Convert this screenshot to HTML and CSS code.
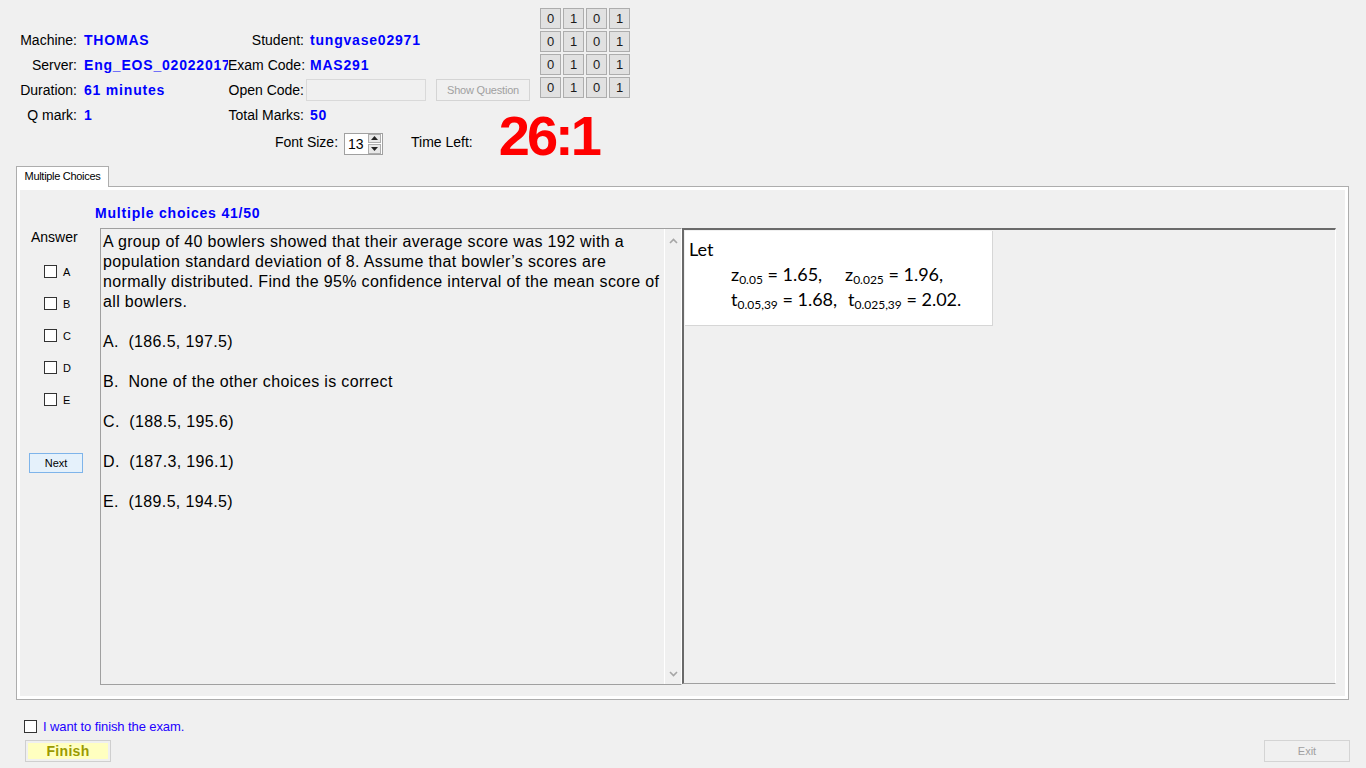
FILE: index.html
```html
<!DOCTYPE html>
<html lang="en">
<head>
<meta charset="utf-8">
<title>Exam Client</title>
<link rel="stylesheet" href="styles.css">
</head>
<body>
<div class="app">
  <header class="top">
    <div class="top-main">
      <div class="info">
        <span class="lbl c1">Machine:</span><span class="val">THOMAS</span>
        <span class="lbl c3">Student:</span><span class="val">tungvase02971</span>

        <span class="lbl c1">Server:</span><span class="val">Eng_EOS_02022017</span>
        <span class="lbl c3">Exam Code:</span><span class="val">MAS291</span>

        <span class="lbl c1">Duration:</span><span class="val">61 minutes</span>
        <span class="lbl c3">Open Code:</span>
        <span class="open-cell"><span class="textbox"></span><span class="btn-disabled showq">Show Question</span></span>

        <span class="lbl c1">Q mark:</span><span class="val">1</span>
        <span class="lbl c3">Total Marks:</span><span class="val">50</span>
      </div>
      <div class="bits">
        <span class="bit">0</span><span class="bit">1</span><span class="bit">0</span><span class="bit">1</span>
        <span class="bit">0</span><span class="bit">1</span><span class="bit">0</span><span class="bit">1</span>
        <span class="bit">0</span><span class="bit">1</span><span class="bit">0</span><span class="bit">1</span>
        <span class="bit">0</span><span class="bit">1</span><span class="bit">0</span><span class="bit">1</span>
      </div>
    </div>
    <div class="fontrow">
      <span class="fs-label">Font Size:</span>
      <span class="num">
        <span class="num-val">13</span>
        <span class="spin">
          <span class="spin-btn"><svg width="7" height="4" viewBox="0 0 7 4"><path d="M0 4 L3.5 0 L7 4 Z" fill="#222"/></svg></span>
          <span class="spin-btn"><svg width="7" height="4" viewBox="0 0 7 4"><path d="M0 0 L3.5 4 L7 0 Z" fill="#222"/></svg></span>
        </span>
      </span>
      <span class="tl-label">Time Left:</span>
      <span class="timer">26:1</span>
    </div>
  </header>

  <section class="tabs">
    <div class="tab">Multiple Choices</div>
    <div class="panel">
      <div class="page">
        <div class="heading">Multiple choices 41/50</div>
        <div class="body">
          <div class="answers">
            <div class="ans-title">Answer</div>
            <div class="choice"><span class="cb"></span><span class="cl">A</span></div>
            <div class="choice"><span class="cb"></span><span class="cl">B</span></div>
            <div class="choice"><span class="cb"></span><span class="cl">C</span></div>
            <div class="choice"><span class="cb"></span><span class="cl">D</span></div>
            <div class="choice"><span class="cb"></span><span class="cl">E</span></div>
            <div class="next">Next</div>
          </div>
          <div class="qbox">
            <div class="qtext">
              <p>A group of 40 bowlers showed that their average score was 192 with a<br>population standard deviation of 8. Assume that bowler’s scores are<br>normally distributed. Find the 95% confidence interval of the mean score of<br>all bowlers.</p>
              <p>A.&nbsp; (186.5, 197.5)</p>
              <p>B.&nbsp; None of the other choices is correct</p>
              <p>C.&nbsp; (188.5, 195.6)</p>
              <p>D.&nbsp; (187.3, 196.1)</p>
              <p>E.&nbsp; (189.5, 194.5)</p>
            </div>
            <div class="vscroll">
              <svg class="chev" width="9" height="6" viewBox="0 0 9 6"><path d="M1 5 L4.5 1.5 L8 5" fill="none" stroke="#a6a6a6" stroke-width="1.6"/></svg>
              <svg class="chev" width="9" height="6" viewBox="0 0 9 6"><path d="M1 1 L4.5 4.5 L8 1" fill="none" stroke="#a6a6a6" stroke-width="1.6"/></svg>
            </div>
          </div>
          <div class="figpanel">
            <div class="figure">
              <div class="fig-let">Let</div>
              <div class="fig-line">
                <span class="term t1">z<sub>0.05</sub> = 1.65,</span>
                <span class="term">z<sub>0.025</sub> = 1.96,</span>
              </div>
              <div class="fig-line">
                <span class="term t2">t<sub>0.05,39</sub> = 1.68,</span>
                <span class="term">t<sub>0.025,39</sub> = 2.02.</span>
              </div>
            </div>
          </div>
        </div>
      </div>
    </div>
  </section>

  <footer class="bottom">
    <div class="finish-check"><span class="cb"></span><span class="finish-label">I want to finish the exam.</span></div>
    <div class="bottom-row">
      <div class="finish-btn"><span>Finish</span></div>
      <div class="btn-disabled exit">Exit</div>
    </div>
  </footer>
</div>
</body>
</html>
```

FILE: styles.css
```css
* { box-sizing: border-box; }

html, body {
  margin: 0;
  padding: 0;
}

body {
  background: #f0f0f0;
  font-family: "Liberation Sans", Arial, sans-serif;
  font-size: 14px;
  color: #000;
  width: 1366px;
  height: 768px;
  overflow: hidden;
}

/* ---------- header ---------- */
.top-main {
  display: flex;
  align-items: flex-start;
}

.info {
  display: grid;
  grid-template-columns: 80px 148px 78px 224px;
  grid-auto-rows: 25px;
  align-items: center;
  margin-top: 27px;
  height: 101px;
}

.lbl {
  text-align: right;
  white-space: nowrap;
}
.lbl.c1 { padding-right: 3px; }
.lbl.c3 { padding-right: 2px; }

.val {
  color: #0000ff;
  font-weight: bold;
  letter-spacing: 0.8px;
  padding-left: 4px;
  white-space: nowrap;
  overflow: hidden;
}

.open-cell {
  display: flex;
  align-items: center;
  gap: 10px;
}

.textbox {
  width: 120px;
  height: 22px;
  border: 1px solid #d9d9d9;
  background: #f0f0f0;
}

.btn-disabled {
  display: flex;
  align-items: center;
  justify-content: center;
  border: 1px solid #d4d4d4;
  background: #f0f0f0;
  color: #a0a0a0;
  font-size: 11px;
}

.showq {
  width: 94px;
  height: 22px;
  letter-spacing: -0.2px;
}

.bits {
  display: grid;
  grid-template-columns: repeat(4, 21px);
  grid-auto-rows: 21px;
  gap: 2px;
  margin: 8px 0 0 10px;
}

.bit {
  border: 1px solid #adadad;
  background: #e1e1e1;
  display: flex;
  align-items: center;
  justify-content: center;
  font-size: 13px;
  color: #1a1a1a;
}

.fontrow {
  display: flex;
  align-items: center;
  height: 28px;
}

.fs-label { margin-left: 275px; }

.num {
  margin-left: 6px;
  width: 39px;
  height: 22px;
  border: 1px solid #a0a0a0;
  background: #fff;
  display: flex;
  margin-top: 3px;
}

.num-val {
  flex: 1;
  padding-left: 3px;
  line-height: 20px;
  font-size: 14px;
}

.spin {
  width: 14px;
  display: flex;
  flex-direction: column;
  gap: 1px;
  padding: 0 1px 0 0;
}

.spin-btn {
  flex: 1;
  border: 1px solid #adadad;
  background: #e8e8e8;
  display: flex;
  align-items: center;
  justify-content: center;
}

.tl-label { margin-left: 28px; }

.timer {
  margin-left: 26px;
  margin-top: -12px;
  color: #ff0000;
  font-weight: bold;
  font-size: 56px;
  line-height: 1;
  letter-spacing: -3px;
}

/* ---------- tabs ---------- */
.tabs {
  margin: 10px 0 0 16px;
}

.tab {
  width: 93px;
  height: 21px;
  border: 1px solid #adadad;
  border-bottom: none;
  background: #fff;
  font-size: 11px;
  letter-spacing: -0.3px;
  text-align: center;
  line-height: 19px;
  position: relative;
  z-index: 1;
  margin-bottom: -1px;
}

.panel {
  width: 1333px;
  height: 514px;
  border: 1px solid #adadad;
  background: #fff;
  padding: 3px;
}

.page {
  background: #f0f0f0;
  height: 100%;
}

.heading {
  padding-top: 15px;
  margin-left: 75px;
  margin-bottom: 7px;
  height: 31px;
  line-height: 16px;
  color: #0000ff;
  font-weight: bold;
  letter-spacing: 0.8px;
}

.body {
  display: flex;
  height: 457px;
}

/* answers column */
.answers {
  width: 80px;
  padding-top: 1px;
}

.ans-title {
  padding-left: 11px;
  line-height: 16px;
  margin-bottom: 20px;
}

.choice {
  display: flex;
  align-items: center;
  height: 13px;
  margin: 0 0 19px 24px;
  font-size: 11px;
}

.cb {
  width: 13px;
  height: 13px;
  border: 1px solid #333;
  background: #fff;
  flex: none;
}

.cl { margin-left: 6px; }

.next {
  margin: 47px 0 0 9px;
  width: 54px;
  height: 20px;
  border: 1px solid #7eb4ea;
  background: #e5f1fb;
  font-size: 11px;
  display: flex;
  align-items: center;
  justify-content: center;
}

/* question box */
.qbox {
  width: 582px;
  height: 457px;
  border: 1px solid #a0a0a0;
  border-right-color: #fff;
  display: flex;
}

.qtext {
  flex: 1;
  padding: 3px 0 0 2px;
  font-size: 16px;
  line-height: 20px;
  letter-spacing: 0.35px;
  overflow: hidden;
  white-space: nowrap;
}

.qtext p {
  margin: 0 0 20px;
}

.vscroll {
  width: 17px;
  border-left: 1px solid #fff;
  display: flex;
  flex-direction: column;
  justify-content: space-between;
  align-items: center;
  padding: 9px 0 7px;
}

/* figure panel */
.figpanel {
  width: 654px;
  height: 456px;
  border-style: solid;
  border-width: 2px 1px 1px 2px;
  border-color: #6a6a6a #fff #a0a0a0 #6a6a6a;
  padding: 1px 0 0 1px;
}

.figure {
  width: 308px;
  height: 95px;
  background: #fff;
  border-right: 1px solid #d6d6d6;
  border-bottom: 1px solid #d6d6d6;
  font-family: Lato, "Noto Sans", sans-serif;
  font-size: 18px;
  padding: 6px 0 0 4px;
}

.fig-let {
  line-height: 25px;
}

.fig-line {
  display: flex;
  padding-left: 42px;
  line-height: 25px;
  white-space: nowrap;
}

.term sub {
  font-size: 12px;
  vertical-align: -3px;
  line-height: 0;
}

.t1 { width: 114px; }
.t2 { width: 117px; }

/* ---------- bottom ---------- */
.bottom {
  margin-top: 20px;
}

.finish-check {
  display: flex;
  align-items: center;
  margin-left: 24px;
  height: 13px;
}

.finish-label {
  margin-left: 6px;
  font-size: 13px;
  color: #2200ff;
  letter-spacing: -0.1px;
}

.bottom-row {
  display: flex;
  margin-top: 7px;
  padding: 0 16px 0 25px;
}

.finish-btn {
  width: 86px;
  height: 22px;
  border: 1px solid #cfcfcf;
  padding: 2px;
  background: #f0f0f0;
}

.finish-btn span {
  display: flex;
  align-items: center;
  justify-content: center;
  height: 100%;
  background: #ffffc0;
  color: #9a9a00;
  font-weight: bold;
  font-size: 14px;
  letter-spacing: 0.3px;
}

.exit {
  margin-left: auto;
  width: 86px;
  height: 22px;
}
```
